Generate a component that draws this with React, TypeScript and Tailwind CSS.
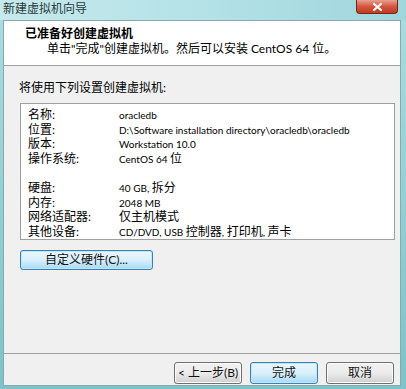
import React from "react";

const cjk = { fontFamily: '"Lato", "Noto Sans CJK SC", sans-serif' };

function Mixed({ text }: { text: string }) {
  const parts = text.split(/([\u3000-\u9fff\uff00-\uffef]+)/).filter((p) => p.length > 0);
  return (
    <>
      {parts.map((p, i) =>
        /[\u3000-\u9fff\uff00-\uffef]/.test(p) ? (
          <span key={i}>{p}</span>
        ) : (
          <span key={i} className="text-[10px]">
            {p}
          </span>
        )
      )}
    </>
  );
}

const rows: [string, string][] = [
  ["名称:", "oracledb"],
  ["位置:", "D:\\Software installation directory\\oracledb\\oracledb"],
  ["版本:", "Workstation 10.0"],
  ["操作系统:", "CentOS 64 位"],
];
const rows2: [string, string][] = [
  ["硬盘:", "40 GB, 拆分"],
  ["内存:", "2048 MB"],
  ["网络适配器:", "仅主机模式"],
  ["其他设备:", "CD/DVD, USB 控制器, 打印机, 声卡"],
];

function Btn({ children, primary, className }: { children: React.ReactNode; primary?: boolean; className?: string }) {
  return (
    <div
      className={
        "flex items-center justify-center whitespace-nowrap rounded-[3px] border text-[12px] text-[#111] " +
        (primary
          ? "border-[#3c7fb1] bg-gradient-to-b from-[#eaf6fd] via-[#d9f0fc] to-[#a7d9f5] shadow-[inset_0_0_0_1px_#bfe6fb] "
          : "border-[#707070] bg-gradient-to-b from-[#f2f2f2] via-[#ebebeb] to-[#cfcfcf] shadow-[inset_0_0_0_1px_#fcfcfc] ") +
        (className ?? "")
      }
    >
      {children}
    </div>
  );
}

function Row({ k, v }: { k: string; v: string }) {
  return (
    <div className="flex h-[14.6px] items-center leading-[14px] whitespace-nowrap">
      <span className="w-[91px] shrink-0">{k}</span>
      <span>
        <Mixed text={v} />
      </span>
    </div>
  );
}

export default function App() {
  return (
    <div
      className="w-[406px] h-[389px] flex flex-col bg-gradient-to-b from-[#a9dde3] to-[#7cc3ca] overflow-hidden"
      style={cjk}
    >
      <div className="h-[20px] flex items-start relative bg-gradient-to-r from-[#c7e9ec] via-[#b3e2e7] to-[#9fd6dc]">
        <span className="ml-[3px] mt-[1px] text-[12px] leading-[16px] text-[#2a3a3c]">新建虚拟机向导</span>
        <div className="absolute right-[8px] top-0 w-[42px] h-[14px] rounded-b-[4px] border border-[#7a2418] border-t-0 bg-gradient-to-b from-[#e8a092] via-[#d2563e] to-[#c03a20] flex items-center justify-center">
          <svg width="9" height="8" viewBox="0 0 9 8">
            <path d="M1 1 L8 7 M8 1 L1 7" stroke="#fff" strokeWidth="2" strokeLinecap="square" />
          </svg>
        </div>
      </div>
      <div className="flex-1 ml-[3px] mr-[5px] mb-[3px] bg-[#f0f0f0] border border-[#8aa9ad] flex flex-col">
        <div className="h-[45px] bg-white border-b border-[#a0a0a0] pt-[5px]">
          <div className="ml-[21px] text-[12px] leading-[15px] font-bold text-black">已准备好创建虚拟机</div>
          <div className="ml-[43px] text-[12px] leading-[15px] text-black whitespace-nowrap">
            单击"完成"创建虚拟机。然后可以安装 CentOS 64 位。
          </div>
        </div>
        <div className="flex-1 flex flex-col px-[15px]">
          <div className="mt-[14px] text-[12px] leading-[15px] text-black">将使用下列设置创建虚拟机:</div>
          <div className="mt-[8px] ml-[1px] w-[375px] h-[137px] bg-white border border-[#a0a0a0] pt-[4px] pl-[7px] text-[12px] text-black">
            {rows.map(([k, v]) => (
              <Row key={k} k={k} v={v} />
            ))}
            <div className="h-[14.6px]" />
            {rows2.map(([k, v]) => (
              <Row key={k} k={k} v={v} />
            ))}
          </div>
          <Btn primary className="mt-[10px] ml-[1px] w-[133px] h-[20px]">
            自定义硬件(C)...
          </Btn>
        </div>
        <div className="h-[32px] border-t border-[#a0a0a0] flex items-start justify-end gap-[8px] pt-[8px] pr-[6px]">
          <Btn className="w-[68px] h-[22px]">&lt; 上一步(B)</Btn>
          <Btn primary className="w-[68px] h-[22px]">完成</Btn>
          <Btn className="w-[68px] h-[22px]">取消</Btn>
        </div>
      </div>
    </div>
  );
}
